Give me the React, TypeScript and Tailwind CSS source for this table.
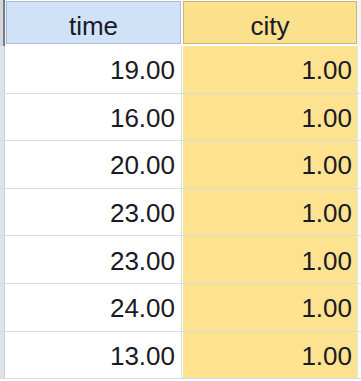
const rows = [
  { time: "19.00", city: "1.00" },
  { time: "16.00", city: "1.00" },
  { time: "20.00", city: "1.00" },
  { time: "23.00", city: "1.00" },
  { time: "23.00", city: "1.00" },
  { time: "24.00", city: "1.00" },
  { time: "13.00", city: "1.00" },
];

export default function App() {
  return (
    <div
      className="w-[361px] h-[381px] bg-white overflow-hidden flex flex-col text-[#1a1a26]"
      style={{ fontFamily: '"Liberation Sans", Arial, sans-serif' }}
    >
      {/* header */}
      <div className="flex h-[46px] shrink-0 bg-white">
        <div className="w-[3px] bg-[#d3d7dc]" />
        <div className="w-[2px] bg-[#737e8a]" />
        <div className="w-[1px] bg-[#eef2f6]" />
        <div className="w-[175px] mt-[1px] mb-[2px] bg-[#cfe2f8] border border-[#aabcd1] flex items-center justify-center text-[26px] leading-none pt-[7px]">
          time
        </div>
        <div className="w-[2px]" />
        <div className="w-[174px] mt-[1px] mb-[2px] bg-[#fbe08d] border border-[#c9b679] flex items-center justify-center text-[26px] leading-none pt-[7px]">
          city
        </div>
        <div className="flex-1 bg-[#f3f4f6]" />
      </div>

      {/* data rows */}
      {rows.map((r, i) => (
        <div key={i} className="flex h-[47.6px] shrink-0 border-b border-[#d3dde8]">
          <div className="w-[4px] bg-[#dfe2e6]" />
          <div className="w-[1px] bg-[#c6d2de]" />
          <div className="w-[1px] bg-white" />
          <div className="w-[175px] bg-white flex items-center justify-end pr-[6px] pt-[2px] text-[26px] leading-none">
            {r.time}
          </div>
          <div className="w-[1px] bg-[#cfdbe7]" />
          <div className="w-[1px] bg-white" />
          <div className="w-[174px] bg-[#fde290] flex items-center justify-end pr-[5px] pt-[2px] text-[26px] leading-none">
            {r.city}
          </div>
          <div className="w-[1px] bg-[#dfe5ec]" />
          <div className="flex-1 bg-white" />
        </div>
      ))}
    </div>
  );
}
